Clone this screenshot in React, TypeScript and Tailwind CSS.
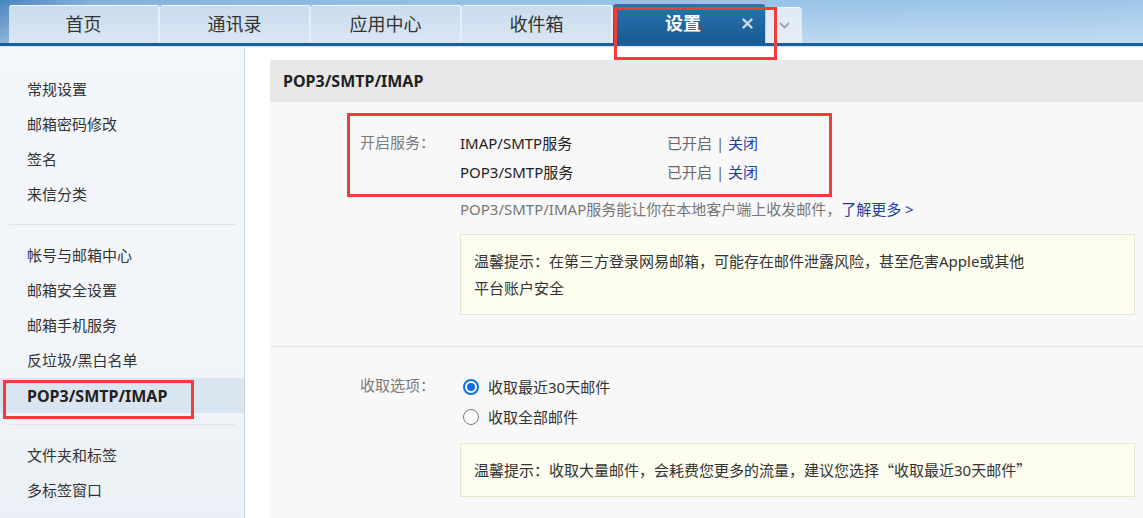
import type { FC } from "react";

const tabs = ["首页", "通讯录", "应用中心", "收件箱"];

const group1 = ["常规设置", "邮箱密码修改", "签名", "来信分类"];
const group2 = ["帐号与邮箱中心", "邮箱安全设置", "邮箱手机服务", "反垃圾/黑白名单", "POP3/SMTP/IMAP"];
const group3 = ["文件夹和标签", "多标签窗口"];

const SideItem: FC<{ label: string; active?: boolean }> = ({ label, active }) => (
  <div
    className={
      active
        ? "flex h-[35px] items-center bg-[#d9e5f1] pl-[27px] text-[16px] font-bold text-[#222]"
        : "flex h-[35px] items-center pl-[27px] text-[15px] text-[#333]"
    }
  >
    {label}
  </div>
);

const Radio: FC<{ checked?: boolean }> = ({ checked }) =>
  checked ? (
    <span className="ml-[3px] flex h-[16px] w-[16px] items-center justify-center rounded-full border-2 border-[#0b6fe8] bg-white">
      <span className="h-[8px] w-[8px] rounded-full bg-[#0b6fe8]" />
    </span>
  ) : (
    <span className="ml-[3px] h-[16px] w-[16px] rounded-full border border-[#7a7a7a] bg-white" />
  );

export default function App() {
  return (
    <div className="relative flex min-h-[518px] flex-col overflow-hidden bg-white font-['Noto_Sans','Noto_Sans_CJK_SC',sans-serif]">
      {/* Tab bar */}
      <header className="bg-[linear-gradient(180deg,rgba(255,255,255,0)_0%,rgba(255,255,255,0.4)_100%),linear-gradient(90deg,#4884c0_0%,#7fb0dc_8%,#93bfe5_40%,#9ec6e9_100%)]">
        <div className="flex h-[43px] items-end pl-[9px]">
          {tabs.map(t => (
            <div
              key={t}
              className="flex h-[38px] w-[151px] items-center justify-center rounded-t-[3px] border-r-2 border-t border-r-[#e8eff7] border-t-white/80 bg-[linear-gradient(180deg,#c9dcee_0%,#dae7f3_100%)] text-[18px] text-[#333]"
            >
              {t}
            </div>
          ))}
          <div className="flex h-[39px] w-[152px] items-center rounded-t-[3px] bg-[linear-gradient(180deg,#2a74b1_0%,#175a94_100%)] pl-[52px] pr-[12px] text-[18px] font-bold text-white">
            设置
            <svg className="ml-auto" width="11" height="11" viewBox="0 0 11 11">
              <path d="M1.5 1.5 9.5 9.5M9.5 1.5 1.5 9.5" stroke="#cfdeec" strokeWidth="2.4" strokeLinecap="round" />
            </svg>
          </div>
          <div className="ml-[1px] flex h-[36px] w-[36px] items-center justify-center rounded-tr-[4px] border-t border-t-white/80 bg-[linear-gradient(180deg,#dde9f5_0%,#e6eff8_100%)]">
            <svg width="11" height="7" viewBox="0 0 11 7">
              <path d="M1 1 5.5 5.5 10 1" fill="none" stroke="#8c9299" strokeWidth="1.5" />
            </svg>
          </div>
        </div>
        <div className="h-[3px] bg-[#1a5e9b]" />
      </header>
      <div className="h-[2px] bg-[linear-gradient(180deg,#d3d9df,#ffffff)]" />

      <div className="flex flex-1">
        {/* Sidebar */}
        <aside className="w-[245px] shrink-0 border-r border-[#c9d5e0] bg-[linear-gradient(180deg,#f3f7fb_0%,#f2f6fa_60%,#eaf0f5_100%)] pt-[24px]">
          {group1.map(l => (
            <SideItem key={l} label={l} />
          ))}
          <div className="mx-[9px] mb-[13px] mt-[12px] h-px bg-[#dde3e8]" />
          {group2.map(l => (
            <SideItem key={l} label={l} active={l === "POP3/SMTP/IMAP"} />
          ))}
          <div className="mx-[9px] mb-[13px] mt-[11px] h-px bg-[#dde3e8]" />
          {group3.map(l => (
            <SideItem key={l} label={l} />
          ))}
        </aside>

        {/* Content */}
        <main className="flex-1 pl-[25px] pt-[12px]">
          <div className="h-full bg-[#f8f8f8]">
            <div className="flex h-[42px] items-center rounded-tl-[4px] bg-[#e8e8e8] pl-[13px] text-[16px] font-bold text-[#222]">
              POP3/SMTP/IMAP
            </div>

            <section className="border-b border-[#e6e6e6] pb-[31px] pt-[27px] text-[15px]">
              <div className="flex">
                <div className="w-[190px] shrink-0 pl-[90px] leading-[27px] text-[#7a7a7a]">开启服务：</div>
                <div>
                  <div className="flex leading-[29px] text-[#222]">
                    <span className="w-[207px]">IMAP/SMTP服务</span>
                    <span className="text-[#666]">
                      已开启 | <span className="text-[#1c3f9f]">关闭</span>
                    </span>
                  </div>
                  <div className="flex leading-[29px] text-[#222]">
                    <span className="w-[207px]">POP3/SMTP服务</span>
                    <span className="text-[#666]">
                      已开启 | <span className="text-[#1c3f9f]">关闭</span>
                    </span>
                  </div>
                  <div className="mt-[8px] leading-[29px] text-[#777]">
                    POP3/SMTP/IMAP服务能让你在本地客户端上收发邮件，
                    <span className="text-[#1c3f9f]">了解更多 &gt;</span>
                  </div>
                  <div className="mt-[10px] w-[675px] border border-[#e8e6cf] bg-[#fdfdf0] pb-[12px] pl-[13px] pt-[13px] leading-[27px] text-[#333]">
                    温馨提示：在第三方登录网易邮箱，可能存在邮件泄露风险，甚至危害Apple或其他
                    <br />
                    平台账户安全
                  </div>
                </div>
              </div>
            </section>

            <section className="pt-[25px] text-[15px]">
              <div className="flex">
                <div className="w-[190px] shrink-0 pl-[90px] leading-[27px] text-[#7a7a7a]">收取选项：</div>
                <div>
                  <label className="flex h-[30px] items-center gap-[9px] text-[#333]">
                    <Radio checked />
                    收取最近30天邮件
                  </label>
                  <label className="flex h-[30px] items-center gap-[9px] text-[#333]">
                    <Radio />
                    收取全部邮件
                  </label>
                  <div className="mt-[11px] w-[675px] border border-[#e8e6cf] bg-[#fdfdf0] py-[13px] pl-[13px] leading-[26px] text-[#333]">
                    温馨提示：收取大量邮件，会耗费您更多的流量，建议您选择
                    <span className="font-['Noto_Sans_CJK_SC',sans-serif]">“</span>收取最近30天邮件
                    <span className="font-['Noto_Sans_CJK_SC',sans-serif]">”</span>
                  </div>
                </div>
              </div>
            </section>
          </div>
        </main>
      </div>

      {/* Red annotation boxes */}
      <div className="pointer-events-none absolute left-[614px] top-[7px] h-[53px] w-[163px] border-[3px] border-[#f23c3c]" />
      <div className="pointer-events-none absolute left-[3px] top-[380px] h-[39px] w-[191px] border-[3px] border-[#f23c3c]" />
      <div className="pointer-events-none absolute left-[347px] top-[113px] h-[84px] w-[485px] border-[3px] border-[#f23c3c]" />
    </div>
  );
}
